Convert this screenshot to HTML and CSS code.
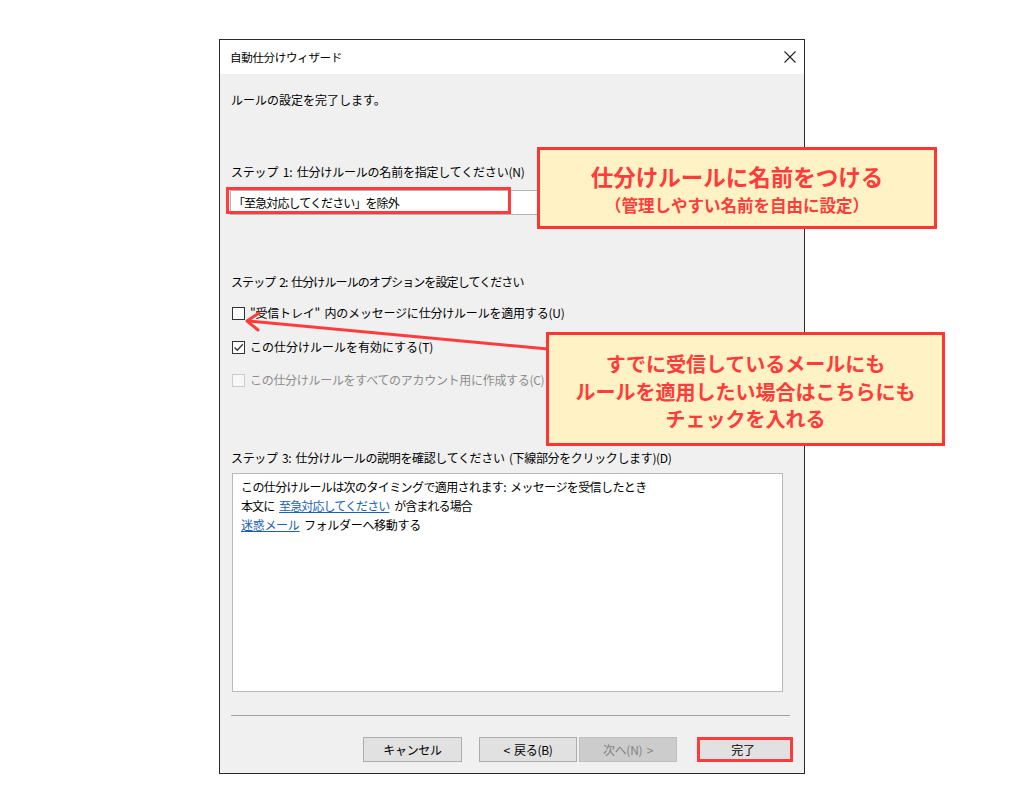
FILE: index.html
```html
<!DOCTYPE html>
<html lang="ja">
<head>
<meta charset="utf-8">
<link rel="stylesheet" href="styles.css">
</head>
<body>
<div class="dialog">
  <div class="titlebar">
    <span class="title">自動仕分けウィザード</span>
    <svg class="close" width="12" height="12" viewBox="0 0 12 12"><path d="M0.5 0.5 L11.5 11.5 M11.5 0.5 L0.5 11.5" stroke="#222" stroke-width="1.1" fill="none"/></svg>
  </div>
  <div class="content">
    <div class="intro">ルールの設定を完了します。</div>
    <div class="label step1">ステップ 1: 仕分けルールの名前を指定してください(N)</div>
    <div class="textbox">「至急対応してください」を除外</div>
    <div class="label step2">ステップ 2: 仕分けルールのオプションを設定してください</div>
    <div class="check cb1"><span class="box"></span><span>"受信トレイ" 内のメッセージに仕分けルールを適用する(U)</span></div>
    <div class="check cb2"><span class="box"><svg width="11" height="11" viewBox="0 0 11 11"><path d="M1.5 5.5 L4.3 8.3 L9.8 2.3" stroke="#333" stroke-width="1.3" fill="none"/></svg></span><span>この仕分けルールを有効にする(T)</span></div>
    <div class="check cb3 disabled"><span class="box"></span><span>この仕分けルールをすべてのアカウント用に作成する(C)</span></div>
    <div class="label step3">ステップ 3: 仕分けルールの説明を確認してください (下線部分をクリックします)(D)</div>
    <div class="desc">
      <div class="d1">この仕分けルールは次のタイミングで適用されます: メッセージを受信したとき</div>
      <div class="d2">本文に <span class="link">至急対応してください</span> が含まれる場合</div>
      <div class="d3"><span class="link">迷惑メール</span> フォルダーへ移動する</div>
    </div>
    <div class="sep"></div>
    <div class="buttons">
      <button class="btn cancel">キャンセル</button>
      <button class="btn back">&lt; 戻る(B)</button>
      <button class="btn next" disabled>次へ(N) &gt;</button>
      <button class="btn done">完了</button>
    </div>
  </div>
</div>

<div class="hl-textbox"></div>
<svg class="arrow" width="1024" height="800" viewBox="0 0 1024 800">
  <line x1="548" y1="349" x2="248" y2="321" stroke="#ff3b3b" stroke-width="3" stroke-linecap="round"/>
  <polyline points="259,313 247,321 258,330" stroke="#ff3b3b" stroke-width="3" fill="none" stroke-linecap="round" stroke-linejoin="round"/>
</svg>
<div class="callout c1">
  <div class="c1-main">仕分けルールに名前をつける</div>
  <div class="c1-sub">（管理しやすい名前を自由に設定）</div>
</div>
<div class="callout c2">
  <div>すでに受信しているメールにも</div>
  <div>ルールを適用したい場合はこちらにも</div>
  <div>チェックを入れる</div>
</div>
</body>
</html>
```

FILE: styles.css
```css
html, body {
  margin: 0;
  padding: 0;
  background: #ffffff;
}
body {
  position: relative;
  width: 1024px;
  height: 800px;
  overflow: hidden;
  font-family: "Noto Sans CJK JP", "Noto Sans", sans-serif;
  font-size: 12px;
  color: #000;
}
.dialog {
  position: absolute;
  left: 219px;
  top: 39px;
  width: 584px;
  border: 1px solid #2a2a2a;
  background: #f0f0f0;
  word-spacing: 2px;
}
.titlebar {
  height: 34px;
  background: #ffffff;
  display: flex;
  align-items: center;
  justify-content: space-between;
  padding: 0 8px 0 10px;
}
.title {
  font-size: 11.5px;
  line-height: 16px;
  letter-spacing: -0.3px;
}
.close {
  display: block;
}
.content {
  padding: 0 11px 11px 11px;
  line-height: 16px;
}
.intro {
  margin-top: 18px;
  letter-spacing: 0;
}
.step1 { margin-top: 56px; letter-spacing: -0.2px; }
.step2 { margin-top: 59px; letter-spacing: -0.9px; }
.step3 { margin-top: 62px; letter-spacing: -0.35px; }
.textbox {
  margin: 10px 0 0 -1px;
  height: 23px;
  border: 1px solid #b4b4b4;
  background: #fff;
  line-height: 23px;
  padding-left: 2px;
  letter-spacing: -0.9px;
}
.check {
  display: flex;
  align-items: center;
  height: 16px;
  gap: 5px;
}
.cb1 { margin-top: 15px; letter-spacing: -0.2px; }
.cb2 { margin-top: 18px; letter-spacing: 0; }
.cb3 { margin-top: 17px; letter-spacing: -0.3px; }
.box {
  width: 13px;
  height: 13px;
  border: 1px solid #333;
  background: #fff;
  box-sizing: border-box;
  margin-left: 1px;
  display: flex;
  align-items: center;
  justify-content: center;
  flex: none;
}
.disabled { color: #8c8c8c; }
.disabled .box { border-color: #cccccc; background: #f7f7f7; }
.desc {
  margin: 7px 10px 0 1px;
  height: 211px;
  border: 1px solid #b9b9b9;
  background: #fff;
  padding: 3px 8px 3px 8px;
  line-height: 19px;
}
.d1 { letter-spacing: -0.6px; }
.d2 { letter-spacing: -0.9px; word-spacing: 3px; }
.d3 { letter-spacing: -0.3px; }
.link {
  color: #1a62b0;
  text-decoration: underline;
}
.sep {
  margin: 23px 3px 0 0;
  height: 1px;
  background: #a0a0a0;
}
.buttons {
  margin-top: 21px;
  display: flex;
  justify-content: flex-end;
  height: 25px;
}
.btn {
  font-family: inherit;
  font-size: 12px;
  height: 25px;
  border: 1px solid #adadad;
  background: #e1e1e1;
  color: #000;
  padding: 0;
  margin: 0;
  letter-spacing: -0.3px;
  word-spacing: 2px;
}
.cancel { width: 99px; }
.back { width: 98px; margin-left: 17px; }
.next { width: 98px; margin-left: 2px; background: #cccccc; border-color: #bfbfbf; color: #838383; }
.done { width: 96px; margin-left: 20px; border: 3px solid #ff3b3b; padding-right: 4px; }

.hl-textbox {
  position: absolute;
  left: 226px;
  top: 187px;
  width: 279px;
  height: 21px;
  border: 3px solid #ff3b3b;
}
.arrow {
  position: absolute;
  left: 0;
  top: 0;
  pointer-events: none;
}
.callout {
  position: absolute;
  box-sizing: border-box;
  border: 3px solid #ff3535;
  background: #fff2c4;
  color: #ff3b3b;
  font-weight: bold;
  text-align: center;
}
.c1 {
  left: 537px;
  top: 147px;
  width: 400px;
  height: 82px;
  padding-top: 13px;
}
.c1-main {
  font-size: 22.5px;
  line-height: 26px;
}
.c1-sub {
  font-size: 16.5px;
  line-height: 20px;
  margin-top: 6px;
}
.c2 {
  left: 546px;
  top: 332px;
  width: 399px;
  height: 114px;
  padding-top: 15px;
  font-size: 20px;
  line-height: 27.5px;
}
```
